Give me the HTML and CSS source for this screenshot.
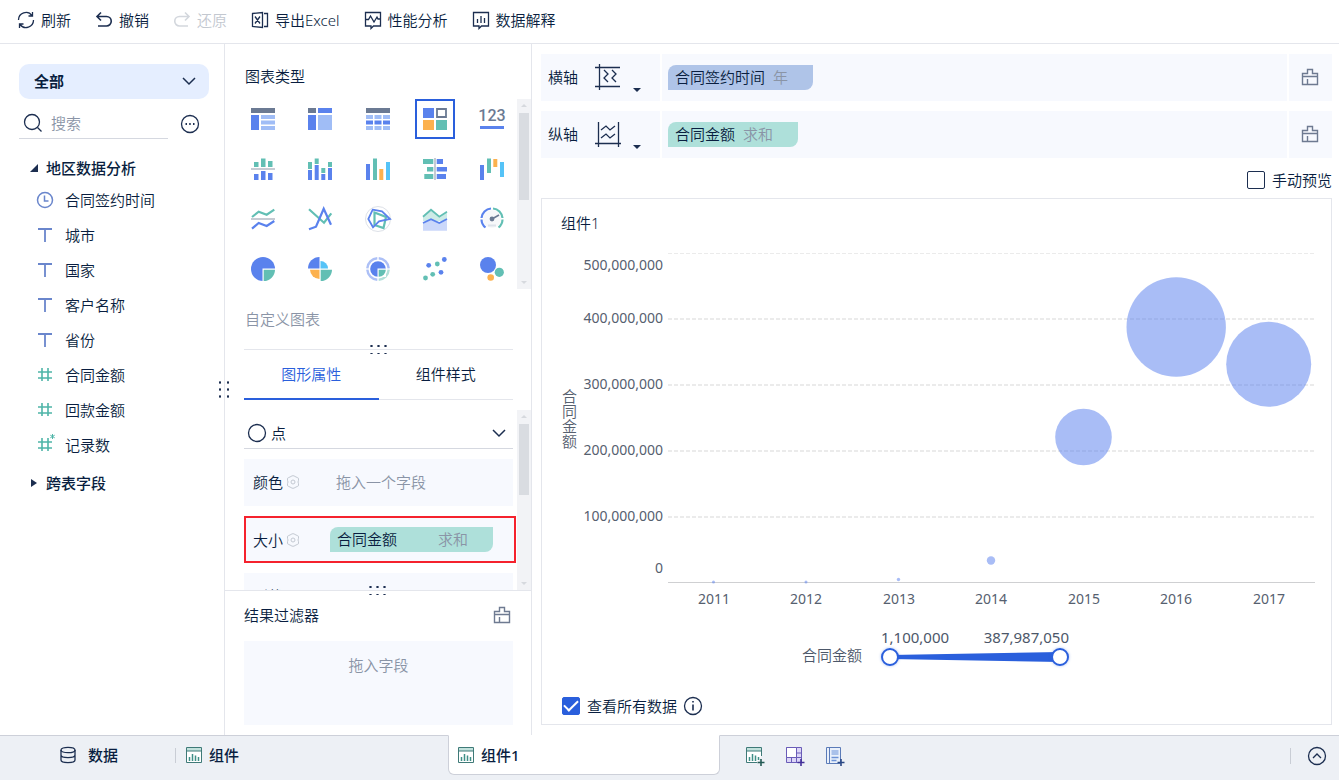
FILE: index.html
```html
<!DOCTYPE html>
<html lang="zh-CN">
<head>
  <meta charset="UTF-8" />
  <meta name="viewport" content="width=device-width, initial-scale=1.0" />
  <title>组件1</title>
  <link rel="stylesheet" href="styles.css">
</head>
<body>
  <!-- icone riusate -->
  <svg class="defs" aria-hidden="true">
    <symbol id="i-text" viewBox="0 0 18 18"><path d="M2 3h14M9 3v13" fill="none" stroke="#6a86cc" stroke-width="1.800"/></symbol>
    <symbol id="i-num" viewBox="0 0 18 18"><path d="M2 6h14M2 12h14M6 2v13M12 2v13" fill="none" stroke="#4fb5a8" stroke-width="1.600"/></symbol>
    <symbol id="i-brush" viewBox="0 0 18 18"><path d="M1.500 16.500v-11h5v-4h5v4h5v11zM1.500 8.500h15M6.500 11v5.500" fill="none" stroke="#6e7a91" stroke-width="1.400"/></symbol>
    <symbol id="i-gear" viewBox="0 0 14 14"><path d="M5 1.500L6 .8h2l1 .7 2.200 1 1.300.8v2L12 7l.5 1.700v2l-1.300.8-2.200 1-1 .7H6l-1-.7-2.200-1-1.300-.8v-2L2 7l-.5-1.700v-2l1.300-.8z" fill="none" stroke="#c3c9d2"/><circle cx="7" cy="7" r="2" fill="none" stroke="#c3c9d2"/></symbol>
    <symbol id="i-chart" viewBox="0 0 18 18"><path d="M1.500 1.500h15v15h-15z" fill="#fff" stroke="#3f7a78" /><path d="M2 2h14v3H2z" fill="#c2e2dd"/><path d="M1.500 5h15" stroke="#3f7a78"/><path d="M4.500 11v4M7.500 8v7M10.500 9.500v5.500M13.500 11v4" stroke="#3f8f87" stroke-width="1.500"/></symbol>
    <symbol id="i-down" viewBox="0 0 14 14"><path d="M1 4l6 6 6-6" fill="none" stroke="#1c2e50" stroke-width="1.500"/></symbol>
  </svg>

  <header class="toolbar">
    <button>
      <svg class="ico" viewBox="0 0 18 18"><path d="M1.500 9a7.500 7.500 0 0 1 13.500-4.500M16.500 9A7.500 7.500 0 0 1 3 13.500M15.500 1v4h-4M2.500 17v-4h4"/></svg>刷新
    </button>
    <button>
      <svg class="ico bold" viewBox="0 0 18 18"><path d="M6 1.500L2 5.500l4 4M2 5.500h9.500a4.500 4.500 0 0 1 0 9.500H3"/></svg>撤销
    </button>
    <button disabled>
      <svg class="ico bold" viewBox="0 0 18 18"><path d="M12 1.500l4 4-4 4M16 5.500H6.500a4.500 4.500 0 0 0 0 9.500H15"/></svg>还原
    </button>
    <button>
      <svg class="ico" viewBox="0 0 18 18"><path d="M1.500 2.500L11.500 1.500v15L1.500 15.500zM13 2.500h3.500v13H13M4 5.500l5 7M9 5.500l-5 7"/></svg>导出Excel
    </button>
    <button>
      <svg class="ico" viewBox="0 0 18 18"><path d="M1.500 1.500h15v13.500h-7L7 17.500V15H1.500zM2 8.500h2.500l2-3.500 3.500 6 3-5 1 2h2"/></svg>性能分析
    </button>
    <button>
      <svg class="ico" viewBox="0 0 18 18"><path d="M1.500 1.500h15v13.500h-7L7 17.500V15H1.500zM5.500 8v4M9 5v7M12.500 7v5"/></svg>数据解释
    </button>
  </header>

  <main class="workspace">
    <aside class="fields">
      <div class="table-select">
        <select aria-label="数据表">
          <option>全部</option>
        </select>
        <svg class="arrow" viewBox="0 0 14 14"><use href="#i-down"/></svg>
      </div>
      <div class="search-row">
        <label class="search">
          <svg class="ico" viewBox="0 0 20 20"><circle cx="9" cy="9" r="7.500"/><path d="M14.500 14.500L18.500 18.500"/></svg>
          <input type="text" placeholder="搜索" />
        </label>
        <button class="more" aria-label="更多">
          <svg class="ico" viewBox="0 0 20 20"><circle cx="10" cy="10" r="8.500"/><path d="M5.500 10h1.500M9.200 10h1.500M13 10h1.500" stroke-width="1.800"/></svg>
        </button>
      </div>
      <h2 class="group"><svg viewBox="0 0 8 8"><path d="M8 0v8H0z"/></svg>地区数据分析</h2>
      <ul class="field-list">
        <li><svg viewBox="0 0 18 18"><circle cx="9" cy="9" r="7.500" fill="none" stroke="#6a86cc" stroke-width="1.500"/><path d="M8.500 4.500V10h4" fill="none" stroke="#6a86cc" stroke-width="1.500"/></svg>合同签约时间</li>
        <li><svg><use href="#i-text"/></svg>城市</li>
        <li><svg><use href="#i-text"/></svg>国家</li>
        <li><svg><use href="#i-text"/></svg>客户名称</li>
        <li><svg><use href="#i-text"/></svg>省份</li>
        <li><svg><use href="#i-num"/></svg>合同金额</li>
        <li><svg><use href="#i-num"/></svg>回款金额</li>
        <li><svg viewBox="0 0 18 18"><use href="#i-num"/><path d="M16.500-2v5M14.300-.8l4.400 2.600M18.700-.8l-4.400 2.600" stroke="#4fb5a8"/></svg>记录数</li>
      </ul>
      <h2 class="group"><svg viewBox="0 0 8 8"><path d="M1 0l6 4-6 4z"/></svg>跨表字段</h2>
      <span class="grip side"></span>
    </aside>

    <section class="config">
      <h2 class="title">图表类型</h2>
      <div class="type-box">
        <div class="type-grid">
          <button><svg viewBox="0 0 24 24"><path class="gr" d="M0 1h24v5H0z"/><path class="bl" d="M0 8h8v15H0z"/><path class="lt" d="M10 8h14v4H10zM10 13.500h14v4H10zM10 19h14v4H10z"/></svg></button>
          <button><svg viewBox="0 0 24 24"><path class="gr" d="M0 1h8v5H0z"/><path class="bl" d="M10 1h14v5H10zM0 8h8v15H0z"/><path class="lt" d="M10 8h14v15H10z"/></svg></button>
          <button><svg viewBox="0 0 24 24"><path class="gr" d="M0 1h24v5H0z"/><path class="lt" d="M0 8h7v4H0zM8.500 8h7v4h-7zM17 8h7v4h-7zM0 19h7v4H0zM8.500 19h7v4h-7zM17 19h7v4h-7z"/><path class="bl" d="M0 13.500h7v4H0zM8.500 13.500h7v4h-7zM17 13.500h7v4h-7z"/></svg></button>
          <button class="selected"><svg viewBox="0 0 24 24"><path class="bl" d="M0 1h11v10H0z"/><path d="M14 2h9v8h-9z" fill="#fff" stroke="#6b7a93" stroke-width="1.800"/><path class="or" d="M0 13h11v10H0z"/><path class="te" d="M13 13h11v10H13z"/></svg></button>
          <button><svg viewBox="0 0 24 24"><text class="kpi" x="12" y="14" text-anchor="middle">123</text><path class="bl" d="M0 19h24v3H0z"/></svg></button>

          <button><svg viewBox="0 0 24 24"><path class="te" d="M3 5h4.500v5H3zM10 1.500h4.500V10H10zM17 4h4.500v6H17z"/><path d="M0 11h24v2H0z" fill="#c6cbd3"/><path class="bl" d="M3 17h4.500v6H3zM10 14h4.500v9H10zM17 16h4.500v7H17z"/></svg></button>
          <button><svg viewBox="0 0 24 24"><path class="te" d="M0 5h4v7H0zM6.700 1.500h4V7h-4zM13.300 11h4v5h-4zM20 5h4v5h-4z"/><path class="bl" d="M0 13h4v10H0zM6.700 8h4v15h-4zM13.300 17h4v6h-4zM20 11h4v12h-4z"/></svg></button>
          <button><svg viewBox="0 0 24 24"><path class="bl" d="M0 7h4v16H0z"/><path class="te" d="M7 1.500h4V23H7z"/><path class="or" d="M13.300 12h4v11h-4z"/><path class="sk" d="M20 5h4v18h-4z"/></svg></button>
          <button><svg viewBox="0 0 24 24"><path class="te" d="M0 2h10.300v5H0zM4 10h6.300v4.500H4zM1.300 17h9v5h-9z"/><path d="M11 1h2v22h-2z" fill="#c6cbd3"/><path class="bl" d="M13.700 2H20v5h-6.300zM13.700 10H24v4.500H13.700zM13.700 17H23v5h-9.300z"/></svg></button>
          <button><svg viewBox="0 0 24 24"><path class="bl" d="M0 8h4v15H0z"/><path class="te" d="M7 1.500h4V16H7z"/><path class="or" d="M13.300 2h4v8h-4z"/><path class="sk" d="M20 5h4v15h-4z"/></svg></button>

          <button><svg viewBox="0 0 24 24"><path class="tl" d="M1 10l6.700-5.300 8 3 7.600-5"/><path d="M0 11h24v2H0z" fill="#c6cbd3"/><path class="ll" d="M1 21.700L7.700 16l8 3 7.600-5"/></svg></button>
          <button><svg viewBox="0 0 24 24"><path class="tl" d="M1 2.300L16 15.700l7.300-9.400"/><path class="ll" d="M1 22.300l7-2.600 7.700-18L23 17.700"/></svg></button>
          <button><svg viewBox="0 0 24 24"><circle cx="12" cy="12" r="12.500" fill="none" stroke="#dde1e8"/><path class="tl" d="M8.500 5.500L20 10l-2.500 11L8.500 18z"/><path class="ll thin" d="M6.700 2.700L16 4.300l8 7.700-11 2.300-6 6L2.300 12z"/></svg></button>
          <button><svg viewBox="0 0 24 24"><path d="M0 9.700l8-7 8.300 7 7.700-5V14H0z" fill="#cdebe7"/><path d="M0 16l8-3.700 8.300 3.700 7.700-4v11.700H0z" fill="#cbd8fa"/><path class="tl thin" d="M0 9.700l8-7 8.300 7 7.700-5"/><path class="ll thin" d="M0 16l8-3.700 8.300 3.700 7.700-4"/></svg></button>
          <button><svg viewBox="0 0 24 24"><circle cx="12" cy="12" r="9" fill="#f7f8fa"/><path class="ll" d="M5.500 20.500A10.500 10.500 0 0 1 1.500 12.500M1.500 11A10.500 10.500 0 0 1 11 1.500"/><path class="tl" d="M13 1.500A10.500 10.500 0 0 1 22.500 11M22.500 12.500A10.500 10.500 0 0 1 18.500 20.500"/><circle class="gr" cx="12" cy="12" r="2.400"/><path d="M12 12l7-4" stroke="#6b7a93" stroke-width="1.500"/><path d="M8 18.500h8" stroke="#dde3ea" stroke-width="2"/></svg></button>

          <button><svg viewBox="0 0 24 24"><circle class="bl" cx="12" cy="12" r="12"/><path d="M11.500 24V11.500H24V24z" fill="#fff"/><path class="te" d="M12.700 12.700H24A11.500 11.500 0 0 1 12.700 24z"/></svg></button>
          <button><svg viewBox="0 0 24 24"><path class="bl" d="M11.500 11.500H0A11.500 11.500 0 0 1 11.500 0z"/><path class="sk" d="M12.500 11.500V4A7.500 7.500 0 0 1 20 11.500z"/><path class="or" d="M11.500 12.700V22A9.500 9.500 0 0 1 2 12.700z"/><path class="te" d="M12.700 12.700H24A11.500 11.500 0 0 1 12.700 24z"/></svg></button>
          <button><svg viewBox="0 0 24 24"><path d="M11.300 22.700A10.700 10.700 0 0 1 1.300 12.700M1.300 11.300A10.700 10.700 0 0 1 11.300 1.300M12.700 1.300A10.700 10.700 0 0 1 22.700 11.300" fill="none" stroke="#adc0f6" stroke-width="2.400"/><path d="M22.700 12.700A10.700 10.700 0 0 1 12.700 22.700" fill="none" stroke="#b3e0da" stroke-width="2.400"/><circle class="bl" cx="12" cy="12" r="7.800"/><path d="M11.500 20v-8.500H20V20z" fill="#fff"/><path class="te" d="M12.700 12.700h7.100a7 7 0 0 1-7.100 7.100z"/></svg></button>
          <button><svg viewBox="0 0 24 24"><circle class="te" cx="2.500" cy="21" r="2.400"/><circle class="te" cx="9.700" cy="17.300" r="2.400"/><circle class="bl" cx="18" cy="15.300" r="2.400"/><circle class="bl" cx="5.700" cy="8.300" r="2.400"/><circle class="te" cx="14.300" cy="7" r="2.400"/><circle class="bl" cx="21.300" cy="2.500" r="2.400"/></svg></button>
          <button><svg viewBox="0 0 24 24"><circle class="bl" cx="8" cy="8" r="8"/><circle class="te" cx="19.300" cy="15.300" r="4.600"/><circle class="or" cx="10.700" cy="20.500" r="3.300"/></svg></button>
        </div>
        <div class="scrollbar"><i class="up"></i><div class="track"><div class="thumb" style="height:54%"></div></div><i class="dn"></i></div>
      </div>
      <div class="custom">自定义图表<span class="grip"></span></div>
      <div class="tabs">
        <button class="active">图形属性</button>
        <button>组件样式</button>
      </div>
      <div class="attr-box">
        <div class="attrs">
          <button class="shape">
            <svg class="ico" viewBox="0 0 20 20"><circle cx="10" cy="10" r="8.500"/></svg>点
            <svg class="arrow" viewBox="0 0 14 14"><use href="#i-down"/></svg>
          </button>
          <div class="attr"><span>颜色</span><svg class="gear"><use href="#i-gear"/></svg><span class="hint">拖入一个字段</span></div>
          <div class="attr marked"><span>大小</span><svg class="gear"><use href="#i-gear"/></svg><span class="tag measure wide">合同金额<em>求和</em></span></div>
          <div class="attr"><span>形状</span></div>
        </div>
        <div class="scrollbar"><i class="up"></i><div class="track"><div class="thumb" style="height:47%"></div></div><i class="dn"></i></div>
      </div>
      <div class="filter">
        <span class="grip"></span>
        <div class="filter-head">
          <h2>结果过滤器</h2>
          <button aria-label="清空"><svg class="brush"><use href="#i-brush"/></svg></button>
        </div>
        <div class="drop">拖入字段</div>
      </div>
    </section>

    <section class="board">
      <div class="axis">
        <div class="axis-name">横轴
          <svg class="axis-ico" viewBox="0 0 26 26"><path d="M0 3.500h25M0 22.500h25M4.500 0v26M9 6l4 4-4 4 4 4M17 6l4 4-4 4 4 4" /></svg>
          <i class="caret"></i>
        </div>
        <div class="axis-fields"><span class="tag dim">合同签约时间<em>年</em></span></div>
        <button class="axis-clear" aria-label="清空横轴"><svg class="brush"><use href="#i-brush"/></svg></button>
      </div>
      <div class="axis">
        <div class="axis-name">纵轴
          <svg class="axis-ico" viewBox="0 0 26 26"><path d="M3.500 1v25M23.500 1v25M0 22.500h26M6 9l5-4 4 4 5-4M6 17l5-4 4 4 5-4"/></svg>
          <i class="caret"></i>
        </div>
        <div class="axis-fields"><span class="tag measure">合同金额<em>求和</em></span></div>
        <button class="axis-clear" aria-label="清空纵轴"><svg class="brush"><use href="#i-brush"/></svg></button>
      </div>
      <label class="check preview"><input type="checkbox" />手动预览</label>

      <div class="card">
        <h2>组件1</h2>
        <svg class="chart" viewBox="0 0 789 380">
          <g class="grid">
            <path d="M126 13.500h647" stroke-width="1"/>
            <path d="M126 79h647M126 145h647M126 211h647M126 277h647"/>
          </g>
          <path d="M126 342.500h647" stroke="#cfd0d2"/>
          <g class="bubbles">
            <circle cx="171.500" cy="342" r="1.500"/>
            <circle cx="264" cy="342" r="1.500"/>
            <circle cx="356.500" cy="339.500" r="1.700"/>
            <circle cx="449" cy="320.500" r="4.200"/>
            <circle cx="541.500" cy="197" r="28.300"/>
            <circle cx="634.200" cy="87" r="49.700"/>
            <circle cx="726.700" cy="124.300" r="42.500"/>
          </g>
          <g class="y-labels">
            <text x="121" y="30">500,000,000</text>
            <text x="121" y="83">400,000,000</text>
            <text x="121" y="149">300,000,000</text>
            <text x="121" y="215">200,000,000</text>
            <text x="121" y="281">100,000,000</text>
            <text x="121" y="333">0</text>
          </g>
          <g class="x-labels">
            <text x="172" y="364">2011</text>
            <text x="264" y="364">2012</text>
            <text x="357" y="364">2013</text>
            <text x="449" y="364">2014</text>
            <text x="542" y="364">2015</text>
            <text x="634" y="364">2016</text>
            <text x="727" y="364">2017</text>
          </g>
          <text class="y-title" x="27" y="149">合同金额</text>
        </svg>
        <div class="legend">
          <span>合同金额</span>
          <div class="size-range">
            <div class="values"><span>1,100,000</span><span>387,987,050</span></div>
            <div class="slider">
              <svg viewBox="0 0 188 20" preserveAspectRatio="none"><path d="M9 8l170-3v10L9 12z"/></svg>
              <input type="range" aria-label="最小值" min="1100000" max="387987050" value="1100000" />
              <input type="range" aria-label="最大值" min="1100000" max="387987050" value="387987050" />
            </div>
          </div>
        </div>
        <div class="card-foot">
          <label class="check"><input type="checkbox" checked />查看所有数据</label>
          <svg class="ico" viewBox="0 0 20 20"><circle cx="10" cy="10" r="8.500"/><path d="M10 8.500v6M10 5v1.600" stroke-width="1.600"/></svg>
        </div>
      </div>
    </section>
  </main>

  <footer class="bottom">
    <button class="tab data">
      <svg class="ico" viewBox="0 0 18 18"><ellipse cx="9" cy="4" rx="7" ry="2.700"/><path d="M2 4v10c0 3.500 14 3.500 14 0V4M2 9c0 3.400 14 3.400 14 0"/></svg>数据
    </button>
    <button class="tab"><svg><use href="#i-chart"/></svg>组件</button>
    <button class="tab current"><svg><use href="#i-chart"/></svg>组件1</button>
    <div class="adders">
      <button aria-label="添加组件"><svg viewBox="0 0 20 20"><path d="M16.500 10V1.500h-15v15H12" fill="#fff" stroke="#3f7a78"/><path d="M2 2h14v3H2z" fill="#c2e2dd"/><path d="M1.500 5h15" stroke="#3f7a78"/><path d="M4.500 11v4M7.500 8v7M10.500 9.500v5.500M13.500 11v3" stroke="#3f8f87" stroke-width="1.500"/><path d="M16 13v7M12.500 16.500h7" stroke="#235a54" stroke-width="1.600"/></svg></button>
      <button aria-label="添加仪表板"><svg viewBox="0 0 20 20"><path d="M1.500 1.500h15v15h-15z" fill="#dcd6f7" stroke="#6a5cb8"/><path d="M1.500 1.500h10v10h-10z" fill="#fff" stroke="#6a5cb8"/><path d="M6.500 11.500v5M11.500 11.500v5M11.500 7h5M11.500 11.500h5" stroke="#6a5cb8"/><path d="M16 13v7M12.500 16.500h7" stroke="#43309a" stroke-width="1.600"/></svg></button>
      <button aria-label="添加分析文档"><svg viewBox="0 0 20 20"><path d="M1.500 1.500h14v16h-14z" fill="#e9f0fb" stroke="#5b7bb8"/><path d="M4.500 1.500v16" stroke="#5b7bb8"/><path d="M6.500 4h7v5h-7z" fill="#a9c1ea"/><path d="M6.500 11.500h7M6.500 14.500h5" stroke="#6d92d6" stroke-width="1.500"/><path d="M16 13v7M12.500 16.500h7" stroke="#2b4885" stroke-width="1.600"/></svg></button>
    </div>
    <button class="fold" aria-label="收起"><svg class="ico" viewBox="0 0 20 20"><circle cx="10" cy="10" r="8.500"/><path d="M6 12l4-4 4 4"/></svg></button>
  </footer>
</body>
</html>
```

FILE: styles.css
```css
* {
  box-sizing: border-box;
}
body {
  margin: 0;
  height: 100vh;
  display: flex;
  flex-direction: column;
  font-family: "Noto Sans", "Noto Sans CJK SC", sans-serif;
  font-size: 15px;
  font-weight: 350;
  line-height: 24px;
  color: #091e40;
  background: #fff;
  overflow: hidden;
}
button, input, select {
  font: inherit;
  color: inherit;
}
button {
  padding: 0;
  border: none;
  background: none;
  cursor: pointer;
}
h2 {
  margin: 0;
  font-size: 15px;
  font-weight: 350;
}
svg {
  display: block;
  flex: none;
  overflow: visible;
}
em {
  font-style: normal;
  color: #8a94a6;
}
.defs {
  position: absolute;
  width: 0;
  height: 0;
}
.ico {
  width: 18px;
  height: 18px;
  fill: none;
  stroke: #1c2e50;
  stroke-width: 1.3;
}
.ico.bold {
  stroke-width: 1.6;
}
.arrow {
  width: 14px;
  height: 14px;
}
.brush {
  width: 18px;
  height: 18px;
}

/* Toolbar */
.toolbar {
  display: flex;
  gap: 24px;
  height: 44px;
  padding: 0 17px 4px;
  border-bottom: 1px solid #e4e6ec;
}
.toolbar button {
  display: flex;
  align-items: center;
  gap: 6px;
}
.toolbar button:disabled {
  color: #c3c8d0;
  cursor: default;
}
.toolbar button:disabled .ico {
  stroke: #d3d7dd;
}

.workspace {
  flex: 1;
  min-height: 0;
  display: flex;
}

/* Campi */
.fields {
  position: relative;
  width: 225px;
  padding: 20px 15px 0 19px;
  border-right: 1px solid #e4e6ec;
}
.table-select {
  position: relative;
}
.table-select select {
  width: 100%;
  height: 35px;
  padding: 0 15px 2px;
  border: none;
  border-radius: 10px;
  background: #e5eeff;
  font-weight: 700;
  appearance: none;
}
.table-select .arrow {
  position: absolute;
  right: 13px;
  top: 10px;
  pointer-events: none;
}
.search-row {
  display: flex;
  align-items: center;
  justify-content: space-between;
  padding: 9px 9px 0 0;
}
.search {
  display: flex;
  align-items: center;
  gap: 8px;
  width: 149px;
  height: 31px;
  padding-left: 4px;
  border-bottom: 1px solid #d5d8e0;
}
.search .ico, .more .ico {
  width: 20px;
  height: 20px;
}
.search input {
  width: 100px;
  padding: 0;
  border: none;
  outline: none;
  background: none;
}
.search input::placeholder {
  color: #8a94a6;
}
.group {
  display: flex;
  align-items: center;
  gap: 8px;
  height: 24px;
  margin-top: 17px;
  padding-left: 11px;
  font-weight: 500;
}
.group svg {
  width: 8px;
  height: 8px;
  fill: #1c2e50;
}
.field-list {
  margin: 2px 0 0;
  padding: 0;
  list-style: none;
}
.field-list li {
  display: flex;
  align-items: center;
  gap: 11px;
  height: 35px;
  padding-left: 17px;
}
.field-list svg {
  width: 18px;
  height: 18px;
}
.field-list + .group {
  margin-top: 9px;
}
.grip {
  position: absolute;
  left: 50%;
  bottom: -5px;
  width: 21px;
  height: 12px;
  margin-left: -11px;
  background: radial-gradient(circle, #1c2e50 1px, transparent 1.3px) 0 0 / 7px 8px;
}
.grip.side {
  left: auto;
  right: -8px;
  top: 335px;
  width: 16px;
  height: 21px;
  background-size: 8px 7px;
}

/* Configurazione grafico */
.config {
  width: 307px;
  display: flex;
  flex-direction: column;
  border-right: 1px solid #e4e6ec;
}
.title {
  margin: 20px 0 11px 20px;
}
.type-box {
  display: flex;
  justify-content: space-between;
  height: 190px;
  padding-left: 18px;
}
.type-grid {
  display: grid;
  grid-template-columns: repeat(5, 40px);
  grid-auto-rows: 40px;
  justify-content: space-between;
  width: 269px;
  gap: 10px 0;
}
.type-grid button {
  display: flex;
  align-items: center;
  justify-content: center;
  border: 2px solid transparent;
}
.type-grid button.selected {
  border-color: #2a5fdc;
}
.type-grid svg {
  width: 24px;
  height: 24px;
}
.bl { fill: #5a82ed; }
.lt { fill: #a0bdf6; }
.gr { fill: #6b7a93; }
.te { fill: #62bfb4; }
.or { fill: #fcb14e; }
.sk { fill: #55c3f7; }
.tl, .ll {
  fill: none;
  stroke: #62bfb4;
  stroke-width: 2.2;
}
.ll {
  stroke: #5a82ed;
}
.thin {
  stroke-width: 1.8;
}
.kpi {
  font-family: Roboto, sans-serif;
  font-size: 16px;
  font-weight: 500;
  fill: #6b7a93;
}
.scrollbar {
  display: flex;
  flex-direction: column;
  align-items: center;
  width: 14px;
  padding: 5px 0;
  background: #f2f3f6;
}
.scrollbar i {
  border: 3px solid transparent;
}
.scrollbar .up {
  border-top-width: 0;
  border-bottom-color: #d6d9de;
}
.scrollbar .dn {
  border-bottom-width: 0;
  border-top-color: #d6d9de;
}
.scrollbar .track {
  flex: 1;
  width: 10px;
  margin: 6px 0;
}
.scrollbar .thumb {
  background: #d9dce1;
}
.custom {
  position: relative;
  height: 61px;
  margin: 0 18px 0 19px;
  padding: 18px 1px 0;
  border-bottom: 1px solid #e4e6ec;
  color: #8a94a6;
}
.tabs {
  display: flex;
  height: 50px;
  margin: 0 18px 10px 19px;
}
.tabs button {
  flex: 1;
  padding-bottom: 1px;
  border-bottom: 1px solid #e4e6ec;
}
.tabs button.active {
  padding-bottom: 0;
  border-bottom: 2px solid #2a5fdc;
  color: #2a5fdc;
}
.attr-box {
  flex: 1;
  min-height: 0;
  display: flex;
  justify-content: space-between;
  padding-left: 19px;
  overflow: hidden;
}
.attrs {
  width: 269px;
}
.shape {
  display: flex;
  align-items: center;
  gap: 4px;
  width: 100%;
  height: 39px;
  margin-bottom: 10px;
  padding: 8px 7px 0 3px;
  border-bottom: 1px solid #d5d8e0;
}
.shape .ico {
  width: 20px;
  height: 20px;
}
.shape .arrow {
  margin-left: auto;
}
.attr {
  display: flex;
  align-items: center;
  height: 47px;
  margin-bottom: 10px;
  padding: 0 9px 2px;
  background: #f7f9fe;
}
.attr.marked {
  width: 272px;
  padding: 0 7px;
  border: 2px solid #f5222d;
}
.gear {
  width: 14px;
  height: 14px;
  margin: 0 30px 0 3px;
}
.hint {
  padding-left: 6px;
  color: #8a94a6;
}
.tag {
  display: inline-flex;
  gap: 8px;
  height: 25px;
  padding: 0 25px 0 7px;
  border-radius: 8px 0;
}
.tag.dim {
  background: #afc4e8;
}
.tag.measure {
  background: #aee0da;
}
.tag.wide {
  width: 163px;
  justify-content: space-between;
}
.filter {
  position: relative;
  height: 145px;
  padding: 12px 18px 10px 19px;
  border-top: 1px solid #e4e6ec;
}
.filter .grip {
  top: -8px;
}
.filter-head {
  display: flex;
  align-items: center;
  justify-content: space-between;
  padding-right: 2px;
}
.drop {
  height: 84px;
  margin-top: 14px;
  padding-top: 12px;
  background: #f7f9fe;
  color: #8a94a6;
  text-align: center;
}

/* Area grafico */
.board {
  flex: 1;
  min-width: 0;
  display: flex;
  flex-direction: column;
  padding: 10px 7px 10px 9px;
}
.axis {
  display: flex;
  gap: 2px;
  height: 47px;
  margin-bottom: 10px;
}
.axis-name, .axis-fields, .axis-clear {
  display: flex;
  align-items: center;
  background: #f7f9fe;
}
.axis-name {
  width: 119px;
  padding: 0 0 1px 7px;
}
.axis-ico {
  width: 26px;
  height: 26px;
  margin: 0 12px 0 17px;
  fill: none;
  stroke: #1c2e50;
  stroke-width: 1.3;
}
.caret {
  align-self: flex-end;
  margin-bottom: 8px;
  border: 4px solid transparent;
  border-top-color: #1c2e50;
  border-bottom-width: 0;
}
.axis-fields {
  flex: 1;
  padding-left: 6px;
}
.axis-clear {
  width: 43px;
  padding: 0 2px 2px 0;
  justify-content: center;
}
.check {
  display: flex;
  align-items: center;
  gap: 7px;
}
.check input {
  width: 18px;
  height: 18px;
  margin: 0;
  border: 1px solid #1c2e50;
  border-radius: 2px;
  appearance: none;
  display: grid;
  place-items: center;
}
.check input:checked {
  border-color: #2a5fdc;
  background: #2a5fdc;
}
.check input:checked::after {
  content: "";
  width: 12px;
  height: 6px;
  margin-bottom: 4px;
  border: solid #fff;
  border-width: 0 0 2px 2px;
  transform: rotate(-45deg);
}
.preview {
  align-self: flex-end;
  margin-bottom: 6px;
}
.card {
  flex: 1;
  display: flex;
  flex-direction: column;
  padding: 12px 0 6px;
  border: 1px solid #e4e6ec;
}
.card h2 {
  padding-left: 19px;
}
.chart {
  width: 100%;
  margin-top: 5px;
}
.chart text {
  font-size: 14px;
  font-weight: 400;
  fill: #56606f;
}
.grid {
  fill: none;
  stroke: #ebebeb;
  stroke-width: 2;
  stroke-dasharray: 4 2;
}
.bubbles {
  fill: #537bed;
  fill-opacity: 0.5;
}
.y-labels {
  text-anchor: end;
}
.x-labels {
  text-anchor: middle;
}
.chart .y-title {
  font-size: 15px;
  font-weight: 350;
  writing-mode: vertical-rl;
}
.legend {
  display: flex;
  justify-content: center;
  align-items: flex-end;
  gap: 19px;
  margin-top: 7px;
  padding-right: 2px;
  color: #4c5769;
}
.size-range {
  width: 188px;
}
.values {
  display: flex;
  justify-content: space-between;
  font-weight: 400;
  line-height: 20px;
}
.slider {
  position: relative;
  height: 20px;
}
.slider svg {
  width: 100%;
  height: 20px;
  fill: #2a5fdc;
}
.slider input {
  position: absolute;
  left: 0;
  top: 0;
  width: 100%;
  height: 20px;
  margin: 0;
  background: none;
  appearance: none;
  pointer-events: none;
}
.slider input::-webkit-slider-thumb {
  width: 18px;
  height: 18px;
  border: 2px solid #2a5fdc;
  border-radius: 50%;
  background: #fff;
  box-shadow: 0 0 3px rgba(42, 95, 220, 0.4);
  appearance: none;
  pointer-events: auto;
}
.card-foot {
  display: flex;
  align-items: center;
  gap: 6px;
  margin-top: auto;
  padding-left: 20px;
}
.card-foot .ico {
  width: 20px;
  height: 20px;
}

/* Barra in basso */
.bottom {
  display: flex;
  height: 45px;
  padding-bottom: 5px;
  border-top: 1px solid #cdd0d9;
  background: #edf0f5;
}
.tab {
  display: flex;
  align-items: center;
  gap: 6px;
  width: 272px;
  padding: 0 0 2px 9px;
  font-weight: 500;
}
.tab svg {
  width: 18px;
  height: 18px;
}
.tab.data {
  position: relative;
  width: 176px;
  gap: 11px;
  padding-left: 59px;
}
.tab.data::after {
  content: "";
  position: absolute;
  right: 0;
  top: 12px;
  width: 1px;
  height: 15px;
  background: #c9cdd5;
}
.tab.current {
  height: 40px;
  margin-top: -1px;
  padding: 0 0 0 8px;
  border: 1px solid #cdd0d9;
  border-top-color: #fff;
  border-radius: 0 0 6px 6px;
  background: #fff;
}
.adders {
  display: flex;
  align-items: center;
  gap: 20px;
  padding-left: 25px;
}
.adders svg, .fold svg {
  width: 20px;
  height: 20px;
}
.fold {
  align-self: center;
  margin-left: auto;
  padding: 0 12px 0 16px;
  border-left: 1px solid #c9cdd5;
}
.fold svg {
  margin: -2px 0;
}
```
